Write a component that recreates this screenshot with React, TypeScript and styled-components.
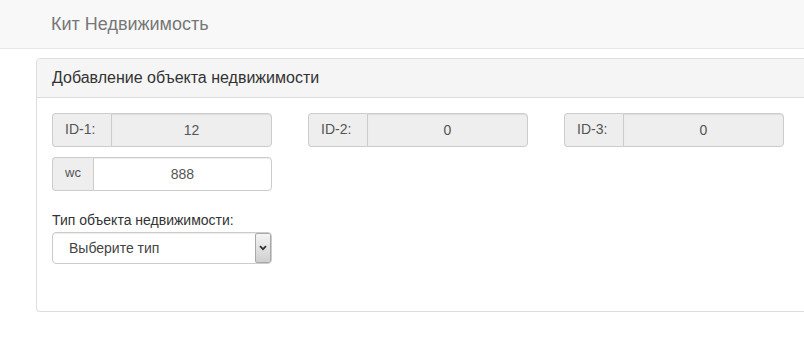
import React from "react";
import styled, { createGlobalStyle } from "styled-components";

const GlobalStyle = createGlobalStyle`
  html, body {
    margin: 0;
    padding: 0;
    background: #fff;
    overflow: hidden;
  }
  body {
    font-family: "Liberation Sans", Arial, Helvetica, sans-serif;
    font-size: 14px;
    line-height: 1.42857;
    color: #333;
  }
  * { box-sizing: border-box; }
`;

const Navbar = styled.header`
  height: 49px;
  background: #f8f8f8;
  border-bottom: 1px solid #e7e7e7;
  display: flex;
  align-items: center;
  padding-left: 51px;
`;

const Brand = styled.a`
  font-size: 18px;
  line-height: 20px;
  color: #777;
  text-decoration: none;
`;

const Panel = styled.section`
  margin: 9px 0 0 36px;
  width: 800px;
  border: 1px solid #ddd;
  border-radius: 4px;
  background: #fff;
  box-shadow: 0 1px 1px rgba(0, 0, 0, 0.05);
`;

const PanelHeading = styled.div`
  background: #f5f5f5;
  border-bottom: 1px solid #ddd;
  border-top-left-radius: 3px;
  border-top-right-radius: 3px;
  padding: 10px 15px;
`;

const PanelTitle = styled.h3`
  margin: 0;
  font-size: 16px;
  font-weight: normal;
  line-height: 1.1;
  color: #333;
`;

const PanelBody = styled.div`
  padding: 15px;
`;

const Grid = styled.div`
  display: grid;
  grid-template-columns: repeat(3, 220px);
  column-gap: 36px;
  row-gap: 10px;
`;

const InputGroup = styled.div`
  display: flex;
  height: 34px;
  width: 220px;
`;

const Addon = styled.span<{ $small?: boolean; $minWidth?: number }>`
  display: flex;
  align-items: center;
  padding: 6px 12px;
  min-width: ${(p) => (p.$minWidth ? `${p.$minWidth}px` : "auto")};
  font-size: ${(p) => (p.$small ? "13px" : "14px")};
  color: #555;
  background: #eee;
  border: 1px solid #ccc;
  border-right: 0;
  border-radius: 4px 0 0 4px;
  white-space: nowrap;
`;

const Field = styled.input<{ $readOnlyLook?: boolean }>`
  flex: 1;
  min-width: 0;
  height: 34px;
  padding: 6px 12px;
  font-family: inherit;
  font-size: 14px;
  color: #555;
  text-align: center;
  background: ${(p) => (p.$readOnlyLook ? "#eee" : "#fff")};
  border: 1px solid #ccc;
  border-radius: 0 4px 4px 0;
  box-shadow: inset 0 1px 1px rgba(0, 0, 0, 0.075);
  outline: none;
`;

const FormGroup = styled.div`
  margin-top: 19px;
  margin-bottom: 32px;
`;

const Label = styled.label`
  display: block;
  font-size: 14px;
  line-height: 20px;
  color: #333;
  margin-bottom: 2px;
`;

const SelectWrap = styled.div`
  display: flex;
  width: 220px;
  height: 32px;
  border: 1px solid #ccc;
  border-radius: 4px;
  background: #fff;
  box-shadow: inset 0 1px 1px rgba(0, 0, 0, 0.075);
  overflow: hidden;
`;

const Select = styled.select`
  flex: 1;
  min-width: 0;
  appearance: none;
  -webkit-appearance: none;
  border: 0;
  background: transparent;
  font-family: inherit;
  font-size: 14px;
  color: #444;
  padding: 0 0 0 16px;
  outline: none;
`;

const ArrowButton = styled.span`
  display: flex;
  align-items: center;
  justify-content: center;
  width: 16px;
  border: 1px solid #a8a8a8;
  border-radius: 2px;
  background: linear-gradient(to bottom, #f4f4f4 0%, #e2e2e2 50%, #cfcfcf 100%);
`;

const Chevron = () => (
  <svg width="8" height="6" viewBox="0 0 8 6">
    <path d="M1 1.2 L4 4.2 L7 1.2" fill="none" stroke="#333" strokeWidth="1.8" />
  </svg>
);

export default function App() {
  return (
    <>
      <GlobalStyle />
      <Navbar>
        <Brand href="#">Кит Недвижимость</Brand>
      </Navbar>
      <Panel>
        <PanelHeading>
          <PanelTitle>Добавление объекта недвижимости</PanelTitle>
        </PanelHeading>
        <PanelBody>
          <Grid>
            <InputGroup>
              <Addon $minWidth={59}>ID-1:</Addon>
              <Field $readOnlyLook readOnly value="12" />
            </InputGroup>
            <InputGroup>
              <Addon $minWidth={59}>ID-2:</Addon>
              <Field $readOnlyLook readOnly value="0" />
            </InputGroup>
            <InputGroup>
              <Addon $minWidth={59}>ID-3:</Addon>
              <Field $readOnlyLook readOnly value="0" />
            </InputGroup>
            <InputGroup>
              <Addon $small>wc</Addon>
              <Field defaultValue="888" />
            </InputGroup>
          </Grid>
          <FormGroup>
            <Label>Тип объекта недвижимости:</Label>
            <SelectWrap>
              <Select defaultValue="">
                <option value="">Выберите тип</option>
              </Select>
              <ArrowButton>
                <Chevron />
              </ArrowButton>
            </SelectWrap>
          </FormGroup>
        </PanelBody>
      </Panel>
    </>
  );
}
